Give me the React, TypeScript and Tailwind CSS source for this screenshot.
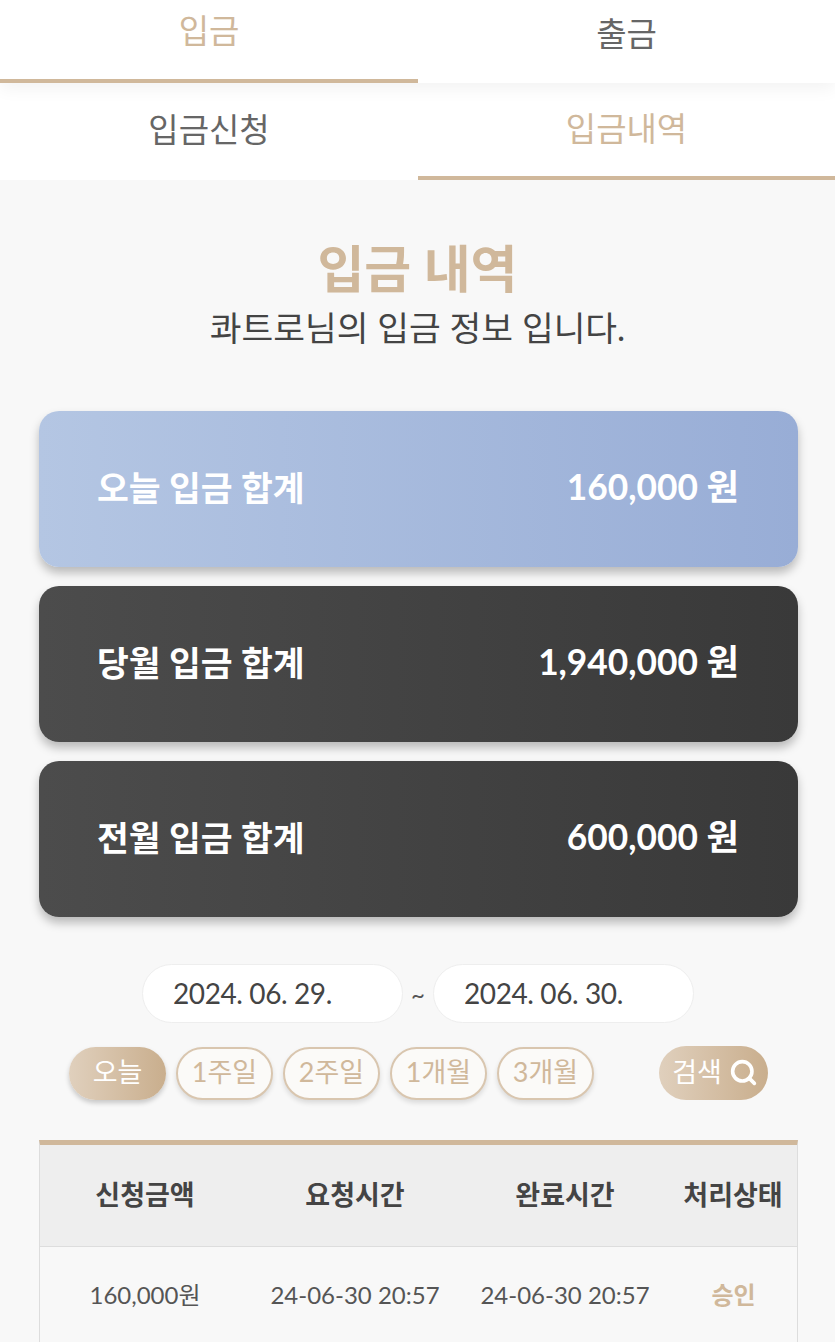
import { Search } from "lucide-react";

const font = "font-['Lato','Noto_Sans_CJK_KR',sans-serif]";

const cards = [
  { label: "오늘 입금 합계", value: "160,000 원", bg: "bg-gradient-to-r from-[#b4c6e3] to-[#98add6]" },
  { label: "당월 입금 합계", value: "1,940,000 원", bg: "bg-gradient-to-r from-[#4c4c4c] to-[#393939]" },
  { label: "전월 입금 합계", value: "600,000 원", bg: "bg-gradient-to-r from-[#4c4c4c] to-[#393939]" },
];

const ranges = ["1주일", "2주일", "1개월", "3개월"];

const gridCols = "grid grid-cols-[210px_210px_210px_1fr]";

export default function App() {
  return (
    <div className={`${font} h-screen overflow-hidden bg-[#f8f8f8] text-[#444]`}>
      {/* Tabs */}
      <div className="relative z-10 flex h-[83px] bg-white shadow-[0_6px_16px_rgba(0,0,0,0.05)]">
        <div className="flex w-[418px] justify-center border-b-4 border-[#d0b89b] pt-[7px] text-[33px] leading-[46px] text-[#d0b89b]">
          입금
        </div>
        <div className="flex flex-1 justify-center pt-[10px] text-[33px] leading-[46px] text-[#666]">
          출금
        </div>
      </div>
      <div className="flex h-[97px] bg-white">
        <div className="flex w-[418px] justify-center pt-[23px] text-[33px] leading-[46px] text-[#666]">
          입금신청
        </div>
        <div className="flex flex-1 justify-center border-b-4 border-[#d0b89b] pt-[22px] text-[33px] leading-[46px] text-[#d0b89b]">
          입금내역
        </div>
      </div>

      {/* Heading */}
      <div className="mt-[56px] text-center">
        <h1 className="text-[51px] font-bold leading-[66px] text-[#d0b89b]">입금 내역</h1>
        <p className="text-[34.5px] leading-[52px] text-[#444]">콰트로님의 입금 정보 입니다.</p>
      </div>

      {/* Summary cards */}
      <div className="ml-[39px] mr-[37px] mt-[57px] flex flex-col gap-[19px]">
        {cards.map((c) => (
          <div
            key={c.label}
            className={`${c.bg} flex h-[156px] items-center justify-between rounded-[20px] pb-[3px] pl-[58px] pr-[59px] text-[35.3px] font-bold text-white shadow-[0_6px_10px_rgba(0,0,0,0.25)]`}
          >
            <span className="text-[34.6px]">{c.label}</span>
            <span>{c.value}</span>
          </div>
        ))}
      </div>

      {/* Date range */}
      <div className="ml-[142px] mt-[47px] flex items-center">
        <div className="flex h-[59px] w-[261px] items-center rounded-full border border-[#eee] bg-white pb-[2px] pl-[30px] text-[28px] tracking-[-0.4px] text-[#444]">
          2024. 06. 29.
        </div>
        <span className="w-[30px] text-center text-[24px] text-[#555]">~</span>
        <div className="flex h-[59px] w-[261px] items-center rounded-full border border-[#eee] bg-white pb-[2px] pl-[30px] text-[28px] tracking-[-0.4px] text-[#444]">
          2024. 06. 30.
        </div>
      </div>

      {/* Quick ranges */}
      <div className="ml-[69px] mr-[67px] mt-[23px] flex items-center">
        <div className="flex items-center gap-[10px]">
          <button className="flex h-[53px] w-[97px] items-center justify-center rounded-full bg-gradient-to-r from-[#e0d0bd] to-[#c9ae8d] pb-[2px] text-[27px] text-white shadow-[0_3px_5px_rgba(0,0,0,0.2)]">
            오늘
          </button>
          {ranges.map((r) => (
            <button
              key={r}
              className="flex h-[53px] w-[97px] items-center justify-center rounded-full border-2 border-[#d9c6af] bg-[#fbfaf8] pb-[2px] text-[27px] text-[#d0b89b] shadow-[0_3px_5px_rgba(0,0,0,0.12)]"
            >
              {r}
            </button>
          ))}
        </div>
        <button className="ml-auto flex h-[54px] w-[109px] items-center justify-center gap-[7px] rounded-full bg-gradient-to-r from-[#e0d0bd] to-[#c9ae8d] pb-[1px] pl-[3px] text-[27px] text-white">
          검색
          <Search size={29} strokeWidth={3} />
        </button>
      </div>

      {/* Table */}
      <div className="ml-[39px] mr-[37px] mt-[40px] border-x border-[#ddd] border-t-[5px] border-t-[#d0b89b]">
        <div className={`${gridCols} h-[102px] items-center border-b border-[#ddd] bg-[#eeeeee] text-center text-[27px] font-bold text-[#444]`}>
          <div>신청금액</div>
          <div>요청시간</div>
          <div>완료시간</div>
          <div className="pr-[1px]">처리상태</div>
        </div>
        <div className={`${gridCols} h-[96px] items-center text-center text-[24px] text-[#555]`}>
          <div>160,000원</div>
          <div>24-06-30 20:57</div>
          <div>24-06-30 20:57</div>
          <div className="font-bold text-[#d0b89b]">승인</div>
        </div>
      </div>
    </div>
  );
}
